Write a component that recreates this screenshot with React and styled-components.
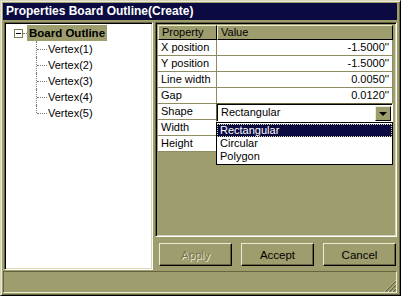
import React from 'react';
import styled, { createGlobalStyle } from 'styled-components';

const OLIVE = '#9e9d6d';
const LIGHT = '#ecebd6';
const SHADOW = '#65643f';
const NAVY = '#0b0b42';

const GlobalStyle = createGlobalStyle`
  html, body {
    margin: 0;
    padding: 0;
    background: ${OLIVE};
  }
  body {
    font-family: "Liberation Sans", Arial, sans-serif;
    font-size: 11px;
    color: #000;
  }
`;

const Window = styled.div`
  width: 401px;
  height: 296px;
  box-sizing: border-box;
  background: ${OLIVE};
  border-style: solid;
  border-width: 1px;
  border-color: #d6d5bc #000 #000 #d6d5bc;
  box-shadow: inset 1px 1px 0 ${LIGHT}, inset -1px -1px 0 ${SHADOW};
  padding: 2px;
  display: flex;
  flex-direction: column;
`;

const TitleBar = styled.div`
  height: 17px;
  background: ${NAVY};
  color: #fff;
  font-weight: bold;
  font-size: 12px;
  line-height: 17px;
  padding-left: 3px;
  white-space: nowrap;
  margin-right: 1px;
`;

const Body = styled.div`
  display: flex;
  height: 248px;
  margin-top: 2px;
  padding-left: 1px;
`;

const Sunken = styled.div`
  box-sizing: border-box;
  border-style: solid;
  border-width: 1px;
  border-color: ${SHADOW} #fff #fff ${SHADOW};
  box-shadow: inset 1px 1px 0 #000, inset -1px -1px 0 #d6d5bc;
`;

const TreePanel = styled(Sunken)`
  width: 149px;
  height: 248px;
  background: #fff;
  padding: 2px 0 0 8px;
`;

const TreeRootRow = styled.div`
  display: flex;
  align-items: center;
  height: 16px;
`;

const ExpandBox = styled.span`
  box-sizing: border-box;
  width: 9px;
  height: 9px;
  border: 1px solid #7a7956;
  background: #fff;
  position: relative;
  margin-left: 1px;
  &::after {
    content: "";
    position: absolute;
    left: 1px;
    right: 1px;
    top: 3px;
    height: 1px;
    background: #000;
  }
`;

const Dots = styled.span`
  width: ${p => p.$w}px;
  border-top: 1px dotted #777;
`;

const RootLabel = styled.span`
  background: ${OLIVE};
  font-weight: bold;
  font-size: 11.5px;
  height: 16px;
  line-height: 16px;
  padding: 0 2px;
`;

const TreeChildren = styled.div`
  padding-left: 23px;
`;

const TreeNode = styled.div`
  position: relative;
  height: 16px;
  line-height: 16px;
  padding-left: 12px;
  &::before {
    content: "";
    position: absolute;
    left: 0;
    top: 0;
    height: ${p => (p.$last ? '8px' : '16px')};
    border-left: 1px dotted #777;
  }
  &::after {
    content: "";
    position: absolute;
    left: 1px;
    top: 8px;
    width: 10px;
    border-top: 1px dotted #777;
  }
`;

const RightColumn = styled.div`
  display: flex;
  flex-direction: column;
  margin-left: 2px;
  width: 242px;
`;

const GridPanel = styled(Sunken)`
  height: 215px;
  padding: 2px 1px 0 2px;
`;

const Table = styled.div`
  width: 235px;
  background: ${OLIVE};
`;

const Row = styled.div`
  display: grid;
  grid-template-columns: 59px 176px;
`;

const HeaderCell = styled.div`
  box-sizing: border-box;
  height: 15px;
  line-height: 13px;
  padding-left: 3px;
  background: ${OLIVE};
  border-style: solid;
  border-width: 1px;
  border-color: ${LIGHT} #000 #000 ${LIGHT};
`;

const Cell = styled.div`
  position: relative;
  box-sizing: border-box;
  height: 16px;
  line-height: 15px;
  padding: 0 3px;
  background: #fff;
  border-right: 1px solid #8d8c62;
  border-bottom: 1px solid #8d8c62;
  text-align: ${p => p.$align || 'left'};
  white-space: nowrap;
`;

const Combo = styled.div`
  position: absolute;
  left: -1px;
  top: -1px;
  right: -1px;
  height: 19px;
  box-sizing: border-box;
  background: #fff;
  border-style: solid;
  border-width: 1px;
  border-color: ${SHADOW} #fff #fff ${SHADOW};
  box-shadow: inset 1px 1px 0 #000;
  display: flex;
  align-items: center;
  padding-left: 4px;
  z-index: 2;
`;

const ComboText = styled.span`
  flex: 1;
  text-align: left;
`;

const ComboButton = styled.span`
  box-sizing: border-box;
  width: 16px;
  height: 15px;
  margin-right: 1px;
  margin-top: 1px;
  background: ${OLIVE};
  border-style: solid;
  border-width: 1px;
  border-color: ${LIGHT} #000 #000 ${LIGHT};
  display: flex;
  align-items: center;
  justify-content: center;
  &::after {
    content: "";
    border-left: 4px solid transparent;
    border-right: 4px solid transparent;
    border-top: 4px solid #000;
    margin-top: 1px;
  }
`;

const ListBox = styled.div`
  position: absolute;
  left: -1px;
  right: -1px;
  top: 18px;
  box-sizing: border-box;
  background: #fff;
  border: 1px solid #000;
  padding: 1px 0 1px;
  z-index: 3;
  text-align: left;
`;

const ListItem = styled.div`
  height: 13px;
  line-height: 13px;
  padding-left: 3px;
  background: ${p => (p.$selected ? NAVY : '#fff')};
  color: ${p => (p.$selected ? '#fff' : '#000')};
  outline: ${p => (p.$selected ? '1px dotted #d8d7b0' : 'none')};
  outline-offset: -1px;
`;

const ButtonRow = styled.div`
  display: flex;
  justify-content: space-between;
  margin-top: 6px;
  padding: 0 1px 0 4px;
`;

const Button = styled.div`
  box-sizing: border-box;
  width: 73px;
  height: 23px;
  border-style: solid;
  border-width: 1px;
  border-color: ${LIGHT} #000 #000 ${LIGHT};
  box-shadow: inset -1px -1px 0 ${SHADOW};
  display: flex;
  align-items: center;
  justify-content: center;
  font-size: 11.5px;
  color: ${p => (p.$disabled ? '#75744d' : '#000')};
  text-shadow: ${p => (p.$disabled ? `1px 1px 0 ${LIGHT}` : 'none')};
`;

const StatusBar = styled.div`
  margin-top: 1px;
  margin-right: 1px;
  height: 22px;
  box-sizing: border-box;
  border-style: solid;
  border-width: 1px;
  border-color: ${SHADOW} ${LIGHT} ${LIGHT} ${SHADOW};
  display: flex;
  justify-content: flex-end;
  align-items: flex-end;
`;

const Grip = () => (
  <svg width="13" height="13" viewBox="0 0 13 13">
    {[0, 4, 8].map(o => (
      <g key={o}>
        <line x1={13} y1={o + 1} x2={o + 1} y2={13} stroke={LIGHT} strokeWidth="1" />
        <line x1={13} y1={o + 2} x2={o + 2} y2={13} stroke={SHADOW} strokeWidth="1.2" />
      </g>
    ))}
  </svg>
);

const props = [
  ['X position', "-1.5000''"],
  ['Y position', "-1.5000''"],
  ['Line width', "0.0050''"],
  ['Gap', "0.0120''"],
];

export default function App() {
  return (
    <>
      <GlobalStyle />
      <Window>
        <TitleBar>Properties Board Outline(Create)</TitleBar>
        <Body>
          <TreePanel>
            <TreeRootRow>
              <ExpandBox />
              <Dots $w={4} />
              <RootLabel>Board Outline</RootLabel>
            </TreeRootRow>
            <TreeChildren>
              {[1, 2, 3, 4, 5].map(n => (
                <TreeNode key={n} $last={n === 5}>Vertex({n})</TreeNode>
              ))}
            </TreeChildren>
          </TreePanel>
          <RightColumn>
            <GridPanel>
              <Table>
                <Row>
                  <HeaderCell>Property</HeaderCell>
                  <HeaderCell>Value</HeaderCell>
                </Row>
                {props.map(([k, v]) => (
                  <Row key={k}>
                    <Cell>{k}</Cell>
                    <Cell $align="right">{v}</Cell>
                  </Row>
                ))}
                <Row>
                  <Cell>Shape</Cell>
                  <Cell>
                    <Combo>
                      <ComboText>Rectangular</ComboText>
                      <ComboButton />
                    </Combo>
                    <ListBox>
                      <ListItem $selected>Rectangular</ListItem>
                      <ListItem>Circular</ListItem>
                      <ListItem>Polygon</ListItem>
                    </ListBox>
                  </Cell>
                </Row>
                <Row>
                  <Cell>Width</Cell>
                  <Cell />
                </Row>
                <Row>
                  <Cell>Height</Cell>
                  <Cell />
                </Row>
              </Table>
            </GridPanel>
            <ButtonRow>
              <Button $disabled>Apply</Button>
              <Button>Accept</Button>
              <Button>Cancel</Button>
            </ButtonRow>
          </RightColumn>
        </Body>
        <StatusBar>
          <Grip />
        </StatusBar>
      </Window>
    </>
  );
}
